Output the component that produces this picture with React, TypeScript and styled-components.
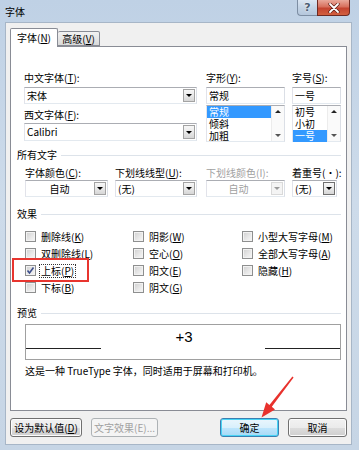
import React from 'react';
import styled, { createGlobalStyle } from 'styled-components';

const GlobalStyle = createGlobalStyle`
  html, body { margin: 0; padding: 0; background: #fff; }
  body {
    font-family: "Noto Sans CJK SC", "Noto Sans", sans-serif;
    font-size: 10px;
    color: #000;
  }
  * { box-sizing: border-box; }
`;

const Window = styled.div`
  position: relative;
  width: 359px;
  height: 450px;
  background: linear-gradient(180deg, #bfd1e5 0%, #cddbea 45%, #c6d5e5 100%);
  display: flex;
  flex-direction: column;
  overflow: hidden;
`;

const TitleBar = styled.div`
  height: 22px;
  flex: none;
  display: flex;
  align-items: flex-start;
  justify-content: space-between;
  padding: 0 9px 0 5px;
`;

const TitleText = styled.div`
  line-height: 23px;
  font-size: 10px;
`;

const Captions = styled.div`
  display: flex;
  height: 16px;
`;

const HelpButton = styled.div`
  width: 20px;
  height: 16px;
  border: 1px solid #7d8ea3;
  border-top: none;
  border-right: none;
  border-bottom-left-radius: 4px;
  background: linear-gradient(180deg, #dbe6f2 0%, #c3d3e5 50%, #b5c7dc 100%);
  display: flex;
  align-items: center;
  justify-content: center;
  color: #4c5d72;
  font-family: "DejaVu Sans", sans-serif;
  font-size: 11px;
  font-weight: bold;
  text-shadow: 0 0 2px #fff;
`;

const CloseButton = styled.div`
  width: 33px;
  height: 16px;
  border: 1px solid #6e2a22;
  border-top: none;
  border-bottom-right-radius: 4px;
  background: linear-gradient(180deg, #e9a99b 0%, #d7705d 45%, #c44430 55%, #d2603f 100%);
  display: flex;
  align-items: center;
  justify-content: center;
`;

const Client = styled.div`
  flex: 1;
  margin: 0 7px 5px 5px;
  background: #f0f0f0;
  border: 1px solid #a7b6c7;
  padding: 5px 4px 7px 4px;
  display: flex;
  flex-direction: column;
`;

const TabStrip = styled.div`
  display: flex;
  align-items: flex-end;
  height: 19px;
  margin-bottom: -1px;
  position: relative;
  z-index: 1;
`;

const Tab = styled.div<{ $active?: boolean; $w: number }>`
  width: ${p => p.$w}px;
  height: ${p => (p.$active ? 19 : 15)}px;
  margin-bottom: ${p => (p.$active ? 0 : 1)}px;
  border: 1px solid #898c95;
  border-bottom: ${p => (p.$active ? 'none' : '1px solid #898c95')};
  border-left: ${p => (p.$active ? '1px solid #898c95' : 'none')};
  border-radius: 2px 2px 0 0;
  background: ${p => (p.$active ? '#fff' : 'linear-gradient(180deg, #f2f2f2 0%, #e6e6e6 50%, #d9d9d9 100%)')};
  display: flex;
  align-items: center;
  justify-content: center;
  padding-bottom: ${p => (p.$active ? 1 : 0)}px;
  line-height: 12px;
`;

const Panel = styled.div`
  flex: 1;
  background: #fff;
  border: 1px solid #898c95;
  padding: 24px 5px 0 6px;
  display: flex;
  flex-direction: column;
`;

const TopRow = styled.div`
  display: flex;
  padding-left: 7px;
`;

const Column = styled.div<{ $w: number; $ml?: number }>`
  width: ${p => p.$w}px;
  margin-left: ${p => p.$ml || 0}px;
  display: flex;
  flex-direction: column;
`;

const Label = styled.div<{ $mt?: number; $disabled?: boolean }>`
  height: 14px;
  line-height: 14px;
  margin-top: ${p => p.$mt || 0}px;
  white-space: nowrap;
  color: ${p => (p.$disabled ? '#a0a0a0' : '#000')};
`;

const Field = styled.div<{ $mt?: number; $h?: number }>`
  height: ${p => p.$h || 17}px;
  margin-top: ${p => p.$mt || 0}px;
  border: 1px solid #abadb3;
  border-left-color: #e2e3ea;
  border-right-color: #dbdfe6;
  border-bottom-color: #e3e9ef;
  background: #fff;
  display: flex;
  align-items: stretch;
`;

const FieldText = styled.div<{ $center?: boolean; $disabled?: boolean }>`
  flex: 1;
  display: flex;
  align-items: center;
  justify-content: ${p => (p.$center ? 'center' : 'flex-start')};
  padding-left: ${p => (p.$center ? 0 : 2)}px;
  color: ${p => (p.$disabled ? '#a0a0a0' : '#000')};
  white-space: nowrap;
  line-height: 12px;
`;

const ArrowButton = styled.div<{ $disabled?: boolean; $dark?: boolean }>`
  width: 12px;
  margin: 1px;
  border: 1px solid ${p => (p.$disabled ? '#d9d9d9' : p.$dark ? '#6f6f6f' : '#a3a3a3')};
  background: ${p => (p.$disabled ? '#f4f4f4' : 'linear-gradient(180deg, #f7f7f7 0%, #e9e9e9 50%, #d6d6d6 100%)')};
  display: flex;
  align-items: center;
  justify-content: center;
  &::after {
    content: '';
    border-left: 3px solid transparent;
    border-right: 3px solid transparent;
    border-top: 3px solid ${p => (p.$disabled ? '#9a9a9a' : '#000')};
  }
`;

const ListBox = styled.div`
  height: 37px;
  margin-top: 1px;
  border: 1px solid #abadb3;
  border-left-color: #e2e3ea;
  border-right-color: #dbdfe6;
  border-bottom-color: #e3e9ef;
  background: #fff;
  display: flex;
`;

const ListItems = styled.div`
  flex: 1;
  display: flex;
  flex-direction: column;
`;

const ListItem = styled.div<{ $selected?: boolean }>`
  height: 12px;
  flex: none;
  line-height: 11px;
  padding-left: 2px;
  background: ${p => (p.$selected ? '#3399ff' : 'transparent')};
  color: ${p => (p.$selected ? '#fff' : '#000')};
  white-space: nowrap;
`;

const ScrollBar = styled.div`
  width: 13px;
  background: #fafafa;
  border-left: 1px solid #ececec;
  display: flex;
  flex-direction: column;
  justify-content: space-between;
  align-items: center;
  padding: 4px 0;
`;

const ScrollArrow = styled.div<{ $up?: boolean }>`
  border-left: 3px solid transparent;
  border-right: 3px solid transparent;
  border-bottom: ${p => (p.$up ? '3px solid #222' : 'none')};
  border-top: ${p => (p.$up ? 'none' : '3px solid #555')};
`;

const SectionHeader = styled.div<{ $mt: number }>`
  display: flex;
  align-items: center;
  height: 12px;
  margin-top: ${p => p.$mt}px;
  line-height: 12px;
  &::after {
    content: '';
    flex: 1;
    height: 1px;
    margin-left: 4px;
    background: #dde3ea;
  }
`;

const ComboRow = styled.div`
  display: flex;
  padding-left: 8px;
  margin-top: 5px;
`;

const CheckGrid = styled.div`
  display: grid;
  grid-template-columns: 108px 109px 1fr;
  grid-template-rows: repeat(4, 17px);
  grid-auto-flow: column;
  padding-left: 8px;
  margin-top: 8px;
`;

const CheckItem = styled.div`
  display: flex;
  align-items: center;
  gap: 3px;
  white-space: nowrap;
`;

const Box = styled.div`
  width: 11px;
  height: 11px;
  flex: none;
  border: 1px solid #8e8f8f;
  background: linear-gradient(135deg, #cfcfcf 0%, #e9e9e9 60%, #f7f7f7 100%);
  box-shadow: inset 0 0 0 1px #f2f2f2;
  display: flex;
  align-items: center;
  justify-content: center;
`;

const CheckText = styled.span<{ $focus?: boolean }>`
  line-height: 12px;
  padding: 0 1px;
  border: 1px ${p => (p.$focus ? 'dotted #333' : 'solid transparent')};
`;

const Highlight = styled.div`
  position: absolute;
  left: 12px;
  top: 258px;
  width: 77px;
  height: 24px;
  border: 2px solid #e8352f;
  pointer-events: none;
`;

const PreviewBox = styled.div`
  height: 36px;
  margin: 5px 0 0 8px;
  border: 1px solid #a0a0a0;
  background: #fff;
  display: grid;
  grid-template-columns: 75px 1fr 75px;
  align-items: start;
`;

const PreviewLine = styled.div`
  height: 1px;
  margin-top: 23px;
  background: #222;
`;

const PreviewText = styled.div`
  text-align: center;
  font-family: "Liberation Sans", Arial, sans-serif;
  font-size: 15px;
  line-height: 20px;
  margin-top: 2px;
  padding-left: 2px;
`;

const Description = styled.div`
  margin: 4px 0 0 8px;
  line-height: 14px;
  white-space: nowrap;
`;

const ButtonRow = styled.div`
  display: flex;
  justify-content: space-between;
  margin-top: 7px;
  height: 19px;
`;

const ButtonGroup = styled.div`
  display: flex;
  gap: 9px;
`;

const Button = styled.div<{ $w: number; $disabled?: boolean; $default?: boolean }>`
  width: ${p => p.$w}px;
  height: 19px;
  border: 1px solid ${p => (p.$disabled ? '#adb2b5' : p.$default ? '#3c7fb1' : '#707070')};
  border-radius: 3px;
  background: ${p =>
    p.$disabled
      ? '#f4f4f4'
      : p.$default
      ? 'linear-gradient(180deg, #eaf6fd 0%, #d9f0fc 50%, #bee6fd 51%, #a7d9f5 100%)'
      : 'linear-gradient(180deg, #f2f2f2 0%, #ebebeb 50%, #dddddd 51%, #cfcfcf 100%)'};
  box-shadow: inset 0 0 0 1px ${p => (p.$disabled ? '#f4f4f4' : p.$default ? '#48d4f5' : '#fcfcfc')};
  color: ${p => (p.$disabled ? '#a0a0a0' : '#000')};
  display: flex;
  align-items: center;
  justify-content: center;
  line-height: 12px;
  white-space: nowrap;
`;

const Overlay = styled.svg`
  position: absolute;
  left: 0;
  top: 0;
  pointer-events: none;
`;

const M = ({ k }: { k: string }) => <u>{k}</u>;

const CheckMark = () => (
  <svg width="9" height="9" viewBox="0 0 9 9">
    <path d="M1.5 4.5 L3.5 7 L7.5 1.5" fill="none" stroke="#3d4f8c" strokeWidth="1.6" />
  </svg>
);

const Check = ({ label, k, checked, focus }: { label: string; k: string; checked?: boolean; focus?: boolean }) => (
  <CheckItem>
    <Box>{checked && <CheckMark />}</Box>
    <CheckText $focus={focus}>
      {label}(<M k={k} />)
    </CheckText>
  </CheckItem>
);

export default function App() {
  return (
    <>
      <GlobalStyle />
      <Window>
        <TitleBar>
          <TitleText>字体</TitleText>
          <Captions>
            <HelpButton>?</HelpButton>
            <CloseButton>
              <svg width="12" height="10" viewBox="0 0 12 10">
                <path d="M2 1 L10 9 M10 1 L2 9" stroke="#5a1b14" strokeWidth="3.2" strokeLinecap="round" />
                <path d="M2 1 L10 9 M10 1 L2 9" stroke="#fff" strokeWidth="1.8" strokeLinecap="round" />
              </svg>
            </CloseButton>
          </Captions>
        </TitleBar>
        <Client>
          <TabStrip>
            <Tab $active $w={48}>
              字体(<M k="N" />)
            </Tab>
            <Tab $w={42}>
              高级(<M k="V" />)
            </Tab>
          </TabStrip>
          <Panel>
            <TopRow>
              <Column $w={173}>
                <Label>
                  中文字体(<M k="T" />):
                </Label>
                <Field $mt={2}>
                  <FieldText>宋体</FieldText>
                  <ArrowButton />
                </Field>
                <Label $mt={4}>
                  西文字体(<M k="F" />):
                </Label>
                <Field $mt={1} $h={18}>
                  <FieldText>Calibri</FieldText>
                  <ArrowButton />
                </Field>
              </Column>
              <Column $w={79} $ml={9}>
                <Label>
                  字形(<M k="Y" />):
                </Label>
                <Field $mt={2}>
                  <FieldText>常规</FieldText>
                </Field>
                <ListBox>
                  <ListItems>
                    <ListItem $selected>常规</ListItem>
                    <ListItem>倾斜</ListItem>
                    <ListItem>加粗</ListItem>
                  </ListItems>
                  <ScrollBar>
                    <ScrollArrow $up />
                    <ScrollArrow />
                  </ScrollBar>
                </ListBox>
              </Column>
              <Column $w={49} $ml={7}>
                <Label>
                  字号(<M k="S" />):
                </Label>
                <Field $mt={2}>
                  <FieldText>一号</FieldText>
                </Field>
                <ListBox>
                  <ListItems>
                    <ListItem>初号</ListItem>
                    <ListItem>小初</ListItem>
                    <ListItem $selected>一号</ListItem>
                  </ListItems>
                  <ScrollBar>
                    <ScrollArrow $up />
                    <ScrollArrow />
                  </ScrollBar>
                </ListBox>
              </Column>
            </TopRow>

            <SectionHeader $mt={7}>所有文字</SectionHeader>
            <ComboRow>
              <Column $w={83}>
                <Label>
                  字体颜色(<M k="C" />):
                </Label>
                <Field>
                  <FieldText $center>自动</FieldText>
                  <ArrowButton />
                </Field>
              </Column>
              <Column $w={82} $ml={7}>
                <Label>
                  下划线线型(<M k="U" />):
                </Label>
                <Field>
                  <FieldText>(无)</FieldText>
                  <ArrowButton />
                </Field>
              </Column>
              <Column $w={79} $ml={9}>
                <Label $disabled>下划线颜色(I):</Label>
                <Field>
                  <FieldText $center $disabled>
                    自动
                  </FieldText>
                  <ArrowButton $disabled />
                </Field>
              </Column>
              <Column $w={45} $ml={7}>
                <Label>着重号(·):</Label>
                <Field>
                  <FieldText>(无)</FieldText>
                  <ArrowButton $dark />
                </Field>
              </Column>
            </ComboRow>

            <SectionHeader $mt={11}>效果</SectionHeader>
            <CheckGrid>
              <Check label="删除线" k="K" />
              <Check label="双删除线" k="L" />
              <Check label="上标" k="P" checked focus />
              <Check label="下标" k="B" />
              <Check label="阴影" k="W" />
              <Check label="空心" k="O" />
              <Check label="阳文" k="E" />
              <Check label="阴文" k="G" />
              <Check label="小型大写字母" k="M" />
              <Check label="全部大写字母" k="A" />
              <Check label="隐藏" k="H" />
            </CheckGrid>

            <SectionHeader $mt={11}>预览</SectionHeader>
            <PreviewBox>
              <PreviewLine />
              <PreviewText>+3</PreviewText>
              <PreviewLine />
            </PreviewBox>
            <Description>这是一种 TrueType 字体，同时适用于屏幕和打印机。</Description>
          </Panel>
          <ButtonRow>
            <ButtonGroup>
              <Button $w={72}>
                设为默认值(<M k="D" />)
              </Button>
              <Button $w={67} $disabled>
                文字效果(E)...
              </Button>
            </ButtonGroup>
            <ButtonGroup>
              <Button $w={59} $default>
                确定
              </Button>
              <Button $w={59}>取消</Button>
            </ButtonGroup>
          </ButtonRow>
        </Client>
        <Highlight />
        <Overlay width="359" height="450" viewBox="0 0 359 450">
          <polygon
            points="292.4,376.4 293.6,377.4 271.8,406.8 275,409.5 261.5,417.5 266.2,402.3 269.4,405"
            fill="#e8322d"
          />
        </Overlay>
      </Window>
    </>
  );
}
